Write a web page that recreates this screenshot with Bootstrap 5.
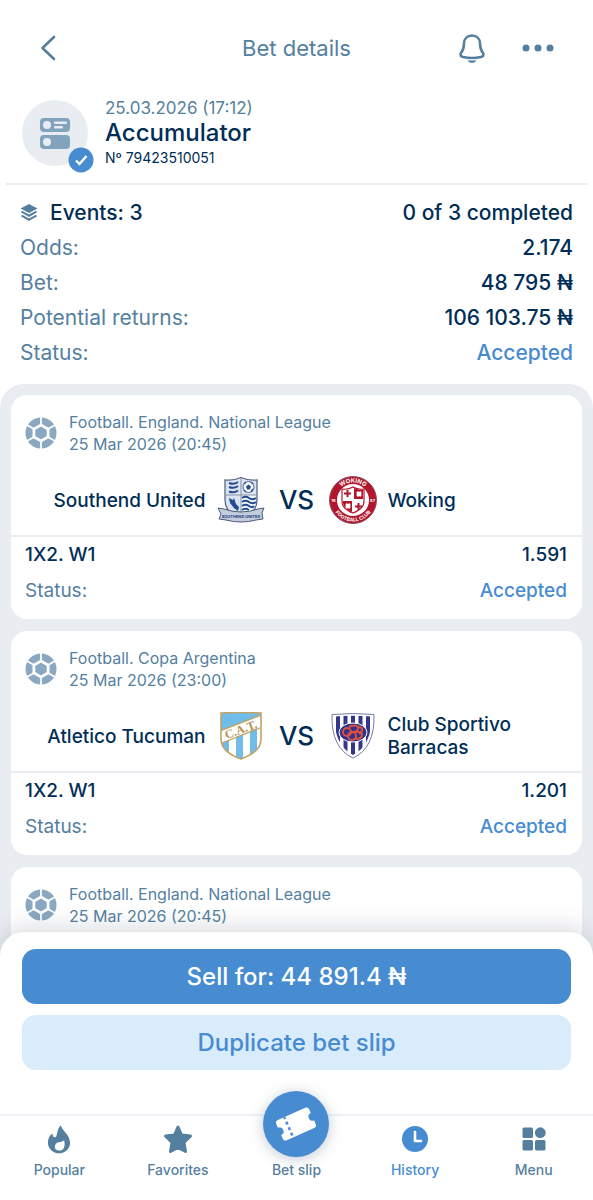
<!DOCTYPE html>
<html lang="en">
<head>
<meta charset="utf-8">
<meta name="viewport" content="width=device-width, initial-scale=1">
<title>Bet details</title>
<link href="https://cdn.jsdelivr.net/npm/bootstrap@5.3.0/dist/css/bootstrap.min.css" rel="stylesheet">
<style>
:root { --ink: #002e57; --slate: #557f9f; --brand: #478bd1; --panel: #e9edf2; }
body { font-family: Inter, "Liberation Sans", sans-serif; color: var(--ink); background: #fff; }
.slate { color: var(--slate); }
.brand { color: var(--brand); }
.top-bar { height: 96px; display: grid; grid-template-columns: 1fr auto 1fr; padding: 0 38px; }
.top-bar h1 { font-size: 22px; }
.icon-btn { border: 0; background: none; padding: 0; color: var(--slate); line-height: 0; }
.slip-head { padding: 1px 22px 14px; gap: 17px; }
.slip-icon { width: 66px; height: 66px; background: var(--panel); }
.slip-check { right: -6px; bottom: -7px; }
.slip-date { font-size: 17px; line-height: 22px; }
.slip-type { font-size: 24px; line-height: 28px; }
.slip-no { font-size: 14px; line-height: 22px; }
.rule { height: 2px; background: var(--panel); margin: 0 6px; }
.totals { font-size: 21px; line-height: 35px; padding: 10px 20px 14px; }
.events { background: var(--panel); border-radius: 24px 24px 0 0; padding: 11px 11px 0; gap: 12px; min-height: 0; }
.event { background: #fff; border-radius: 16px; flex: none; }
.event-head { padding: 16px 14px 0; gap: 12px; font-size: 16px; line-height: 22px; }
.teams { display: grid; grid-template-columns: 1fr auto 1fr; padding: 21px 14px 11px; font-size: 19px; line-height: 23px; border-bottom: 2px solid var(--panel); }
.teams .team { gap: 11px; }
.versus { font-size: 26px; line-height: 32px; width: 64px; }
.pick { font-size: 19px; line-height: 36px; padding: 0 15px 10px 14px; }
.dock { background: #fff; border-radius: 24px 24px 0 0; margin-top: -24px; box-shadow: 0 -4px 24px rgba(60, 70, 90, .2); z-index: 2; padding-top: 17px; }
.actions { padding: 0 22px 44px; gap: 11px; }
.actions .btn { height: 55px; border: 0; border-radius: 14px; font-size: 24px; line-height: 30px; }
.btn-sell { background: var(--brand); color: #fff; }
.btn-copy { background: #d9ecfb; color: var(--brand); }
.tabs { border-top: 2px solid #edf1f5; height: 86px; }
.tabs a { flex: 1 1 0; font-size: 14px; line-height: 18px; color: var(--slate); padding-top: 7px; }
.tabs a.brand { color: var(--brand); }
.tab-icon { height: 32px; margin-bottom: 6px; }
.slip-fab { width: 66px; height: 66px; background: var(--brand); box-shadow: 0 2px 14px rgba(60, 80, 110, .3); bottom: -2px; left: 50%; transform: translateX(-50%); }
</style>
</head>
<body>
<svg width="0" height="0" class="position-absolute" aria-hidden="true">
  <symbol id="ball" viewBox="0 0 32 32">
    <circle cx="16" cy="16" r="15.500" fill="#8aa8c1"/>
    <path d="M16 0v32M2 8l28 16M30 8 2 24" stroke="#fff" stroke-width="1.800"/>
    <path d="M16 7 24 11.500v9L16 25l-8-4.500v-9Z" fill="#fff" stroke="#fff" stroke-linejoin="round"/>
    <path d="m16 10.500 5 2.800v5.400l-5 2.800-5-2.800v-5.400Z" fill="#8aa8c1" stroke="#8aa8c1" stroke-width="1.500" stroke-linejoin="round"/>
  </symbol>
</svg>
<div class="d-flex flex-column vh-100 overflow-hidden">
  <header class="top-bar align-items-center flex-shrink-0">
    <button class="icon-btn text-start" aria-label="Back">
      <svg width="32" height="32" viewBox="0 0 32 32" fill="none" stroke="currentColor" stroke-width="2.600" stroke-linecap="round" stroke-linejoin="round"><path d="M16 5 4.500 16 16 27"/></svg>
    </button>
    <h1 class="m-0 slate fw-normal">Bet details</h1>
    <div class="d-flex justify-content-end align-items-center gap-4">
      <button class="icon-btn me-2" aria-label="Notifications">
        <svg width="34" height="34" viewBox="0 0 34 34"><path d="M17 4.500c-5 0-8 3.500-8 8 0 5-1 7-3 9.500-1.500 2 0 3.500 2 4 5.500 1.200 12.500 1.200 18 0 2-.500 3.500-2 2-4-2-2.500-3-4.500-3-9.500 0-4.500-3-8-8-8Z" fill="none" stroke="currentColor" stroke-width="2.600"/><path d="M12.500 29c3 .7 6 .7 9 0-1 2-2.500 2.800-4.500 2.800S13.500 31 12.500 29Z" fill="currentColor"/></svg>
      </button>
      <button class="icon-btn" aria-label="More">
        <svg width="34" height="32" viewBox="0 0 34 32" fill="currentColor"><circle cx="5" cy="16" r="3.500"/><circle cx="17" cy="16" r="3.500"/><circle cx="29" cy="16" r="3.500"/></svg>
      </button>
    </div>
  </header>

  <section class="slip-head d-flex align-items-center flex-shrink-0">
    <div class="slip-icon rounded-circle position-relative d-flex align-items-center justify-content-center">
      <svg width="32" height="32" viewBox="0 0 32 32"><g fill="#81a3be"><rect x="1" y="1" width="30" height="14" rx="4"/><rect x="1" y="18" width="30" height="14" rx="4"/></g><g fill="#e9edf2"><circle cx="8" cy="8" r="4"/><circle cx="8" cy="25" r="4"/><rect x="15" y="4.500" width="13" height="2.600" rx="1"/><rect x="15" y="9" width="9" height="2.600" rx="1"/></g></svg>
      <svg class="slip-check position-absolute" width="26" height="26" viewBox="0 0 26 26"><circle cx="13" cy="13" r="12.500" fill="#478bd1"/><path d="m8 13.500 3.500 3.500 7-8" fill="none" stroke="#fff" stroke-width="2.400"/></svg>
    </div>
    <div>
      <div class="slip-date slate">25.03.2026 (17:12)</div>
      <div class="slip-type fw-medium">Accumulator</div>
      <div class="slip-no">Nº 79423510051</div>
    </div>
  </section>
  <div class="rule flex-shrink-0"></div>

  <dl class="totals m-0 flex-shrink-0">
    <div class="d-flex justify-content-between"><dt class="fw-medium d-flex align-items-center gap-2"><svg class="me-1" width="18" height="20" viewBox="0 0 18 20" fill="#557f9f"><path d="M9 1 17.500 5.500 9 10 .5 5.500Z"/><path d="m.5 9 2-1L9 11.500 15.500 8l2 1L9 14Z"/><path d="m.5 13 2-1L9 15.500l6.500-3.500 2 1L9 18Z"/></svg>Events: 3</dt><dd class="m-0 fw-medium">0 of 3 completed</dd></div>
    <div class="d-flex justify-content-between"><dt class="fw-normal slate">Odds:</dt><dd class="m-0 fw-medium">2.174</dd></div>
    <div class="d-flex justify-content-between"><dt class="fw-normal slate">Bet:</dt><dd class="m-0 fw-medium">48 795 ₦</dd></div>
    <div class="d-flex justify-content-between"><dt class="fw-normal slate">Potential returns:</dt><dd class="m-0 fw-medium">106 103.75 ₦</dd></div>
    <div class="d-flex justify-content-between"><dt class="fw-normal slate">Status:</dt><dd class="m-0 fw-medium brand">Accepted</dd></div>
  </dl>

  <main class="events d-flex flex-column flex-grow-1 overflow-hidden">
    <article class="event">
      <div class="event-head d-flex align-items-center slate"><svg width="32" height="32" class="flex-shrink-0"><use href="#ball"/></svg><div>Football. England. National League<br>25 Mar 2026 (20:45)</div></div>
      <div class="teams align-items-center fw-medium">
        <div class="team d-flex align-items-center justify-content-end text-end"><span>Southend United</span>
          <svg class="flex-shrink-0" width="48" height="48" viewBox="0 0 48 48">
            <path d="M8 4q8 1 16-2.500Q32 5 40 4v20q0 13-16 20Q8 37 8 24Z" fill="#dbe3f0" stroke="#596889" stroke-width="1.300"/>
            <path d="M24 19h15v7q-1 9-15 14Z" fill="#f5f8fc"/>
            <path d="M24 2v38M8 19h32" stroke="#8793aa"/>
            <g fill="none" stroke="#234c91" stroke-width="2"><path d="M12 7q5 2 9-1M12 11q5 2 9-1M12 15.500q5 2 9-1"/><path d="M25 22q3.500-2.500 7 0t7 0M25 26q3.500-2.500 7 0t7 0M25 30q3.500-2.500 7 0t5 0M25 34q3-2.500 7 0"/></g>
            <path d="m12 22 4 2 1-2 2 6 3 3-1 4-4-3-4-5Z" fill="#234c91"/>
            <circle cx="31.500" cy="11" r="5.500" fill="#fff" stroke="#516a98"/><path d="m31.500 8.500 2.500 2-1 3h-3l-1-3Z" fill="#234c91"/><path d="M27 8l2-2M34 6l2 2M27 14l2 2M36 13l-2 3" stroke="#234c91" stroke-width="1.500"/>
            <path d="M1 32l6 1q17 6 34 0l6-1-2 5 1 6-7 1q-15 4-30 0l-7-1 2-5Z" fill="#c4cddd" stroke="#4c5a77"/>
            <text x="24" y="42" text-anchor="middle" font-size="4" font-weight="700" fill="#1f417d">SOUTHEND UNITED</text>
          </svg></div>
        <div class="versus text-center">VS</div>
        <div class="team d-flex align-items-center">
          <svg class="flex-shrink-0" width="48" height="48" viewBox="0 0 48 48">
            <circle cx="24" cy="24" r="23.500" fill="#b3152d" stroke="#8e5059"/><circle cx="24" cy="24" r="16" fill="#fff"/>
            <path d="M13 13q6 1 11-2 5 3 11 2v12q0 8-11 12-11-4-11-12Z" fill="#fff" stroke="#b3152d" stroke-width="1.200"/>
            <path d="M25 12q5 2 9 2v9h-9ZM14 25h9v11q-8-3-9-9Z" fill="#b3152d"/>
            <path d="M18.500 14v7M15 17.500h7M29.500 27v7M26 30.500h7" stroke="#b3152d" stroke-width="2"/>
            <path d="m28 16 4 4m0-4-4 4M17 28l4 4m0-4-4 4" stroke="#fff" stroke-width="2.500"/>
            <path id="w-top" d="M6.500 24a17.500 17.500 0 0 1 35 0" fill="none"/><path id="w-low" d="M2.500 24a21.500 21.500 0 0 0 43 0" fill="none"/>
            <g font-size="5" font-weight="700" fill="#fff" text-anchor="middle"><text font-size="6"><textPath href="#w-top" startOffset="50%">WOKING</textPath></text><text><textPath href="#w-low" startOffset="50%">FOOTBALL CLUB</textPath></text><text x="4.500" y="26" font-size="4">18</text><text x="43.500" y="26" font-size="4">87</text></g>
          </svg><span>Woking</span></div>
      </div>
      <div class="pick">
        <div class="d-flex justify-content-between fw-medium"><span>1X2. W1</span><span>1.591</span></div>
        <div class="d-flex justify-content-between"><span class="slate">Status:</span><span class="brand fw-medium">Accepted</span></div>
      </div>
    </article>

    <article class="event">
      <div class="event-head d-flex align-items-center slate"><svg width="32" height="32" class="flex-shrink-0"><use href="#ball"/></svg><div>Football. Copa Argentina<br>25 Mar 2026 (23:00)</div></div>
      <div class="teams align-items-center fw-medium">
        <div class="team d-flex align-items-center justify-content-end text-end"><span>Atletico Tucuman</span>
          <svg class="flex-shrink-0" width="48" height="48" viewBox="0 0 48 48">
            <clipPath id="cat"><path d="M4 1q20-1 40 0v26q0 13-20 20Q4 40 4 27Z"/></clipPath>
            <g clip-path="url(#cat)"><path d="M0 0h48v48H0Z" fill="#fff"/><path d="M0 0h48v2L0 20ZM4 31l8-3v20H4ZM19 25l7-3v26h-7ZM33 19l7-3v32h-7Z" fill="#71bdea"/><path d="M0 20 48 1.500M0 33l48-19" stroke="#c2a366" stroke-width="1.300"/></g>
            <path d="M4 1q20-1 40 0v26q0 13-20 20Q4 40 4 27Z" fill="none" stroke="#c2a366" stroke-width="1.600"/>
            <text x="24" y="21.500" transform="rotate(-20 24 18)" text-anchor="middle" font-family="Liberation Serif, serif" font-size="12" font-weight="700" fill="#b6924e">C.A.T.</text>
          </svg></div>
        <div class="versus text-center">VS</div>
        <div class="team d-flex align-items-center">
          <svg class="flex-shrink-0" width="48" height="48" viewBox="0 0 48 48">
            <clipPath id="csb"><path d="M5.500 4.500Q24 3 42.500 4.500 43 33 24 43 5 33 5.500 4.500Z"/></clipPath>
            <path d="M3 2.500q21-2 42 0Q46 36 24 46 2 36 3 2.500Z" fill="#fff" stroke="#7779a9"/>
            <g clip-path="url(#csb)"><path d="M9 0v48M16.500 0v48M24 0v48M31.500 0v48M39 0v48" stroke="#34368d" stroke-width="4"/></g>
            <ellipse cx="24" cy="20.500" rx="14" ry="9.500" fill="#30338c" stroke="#fff"/>
            <g fill="none" stroke="#dd5040" stroke-width="2"><circle cx="18" cy="20" r="4"/><circle cx="23" cy="24" r="4"/><path d="M20 15q6-3 9 0 1 4-5 5 8-1 9 2 0 5-6 5M29 15q5 0 4 4l-3 3"/></g>
          </svg><span>Club Sportivo Barracas</span></div>
      </div>
      <div class="pick">
        <div class="d-flex justify-content-between fw-medium"><span>1X2. W1</span><span>1.201</span></div>
        <div class="d-flex justify-content-between"><span class="slate">Status:</span><span class="brand fw-medium">Accepted</span></div>
      </div>
    </article>

    <article class="event flex-grow-1 rounded-bottom-0">
      <div class="event-head d-flex align-items-center slate"><svg width="32" height="32" class="flex-shrink-0"><use href="#ball"/></svg><div>Football. England. National League<br>25 Mar 2026 (20:45)</div></div>
    </article>
  </main>

  <footer class="dock position-relative flex-shrink-0">
    <div class="actions d-flex flex-column">
      <button class="btn btn-sell w-100 fw-medium">Sell for: 44 891.4 ₦</button>
      <button class="btn btn-copy w-100 fw-medium">Duplicate bet slip</button>
    </div>
    <nav class="tabs d-flex text-center fw-medium" aria-label="Main">
      <a href="#" class="text-decoration-none"><div class="tab-icon d-flex align-items-center justify-content-center"><svg width="24" height="30" viewBox="0 0 26 32"><path d="M15 1c1 6 10 10 10 19a12 11.500 0 0 1-24 0c0-5 2-8 5-10 0 3 1 4.500 3 4 3-2 1-8 6-13Z" fill="currentColor"/><path d="M18.500 17c2 8-1 11.500-5 11.500-7 0-6-8-1-9 3-.5 5-1 6-2.500Z" fill="#fff"/></svg></div>Popular</a>
      <a href="#" class="text-decoration-none"><div class="tab-icon d-flex align-items-center justify-content-center"><svg width="32" height="32" viewBox="0 0 32 32"><path d="m16 4 3.500 8 9 1-6.500 6.500L23.500 28.500 16 24.500 8.500 28.500 10 19.500 3.500 13l9-1Z" fill="currentColor" stroke="currentColor" stroke-width="3" stroke-linejoin="round"/></svg></div>Favorites</a>
      <a href="#" class="text-decoration-none"><div class="tab-icon position-relative"><span class="slip-fab position-absolute rounded-circle d-flex align-items-center justify-content-center"><svg width="44" height="44" viewBox="0 0 44 44"><g transform="rotate(-24 22 22)"><path d="M7 11h30q3 0 3 3v4a4 4 0 0 0 0 8v4q0 3-3 3H7q-3 0-3-3v-4a4 4 0 0 0 0-8v-4q0-3 3-3Z" fill="#fff"/><path d="M14 11v22" stroke="#478bd1" stroke-width="2.500" stroke-dasharray="3 3" stroke-dashoffset="1"/></g></svg></span></div>Bet slip</a>
      <a href="#" class="text-decoration-none brand" aria-current="page"><div class="tab-icon d-flex align-items-center justify-content-center"><svg width="26" height="26" viewBox="0 0 26 26"><circle cx="13" cy="13" r="13" fill="currentColor"/><path d="M13 6v9h6" fill="none" stroke="#fff" stroke-width="2.600" stroke-linecap="round" stroke-linejoin="round"/></svg></div>History</a>
      <a href="#" class="text-decoration-none"><div class="tab-icon d-flex align-items-center justify-content-center"><svg width="24" height="24" viewBox="0 0 24 24" fill="currentColor"><rect x=".5" y=".5" width="10.500" height="10.500" rx="1.500"/><circle cx="18.300" cy="5.700" r="5.400"/><rect x=".5" y="13" width="10.500" height="10.500" rx="1.500"/><rect x="13" y="13" width="10.500" height="10.500" rx="1.500"/></svg></div>Menu</a>
    </nav>
  </footer>
</div>
<script src="https://cdn.jsdelivr.net/npm/bootstrap@5.3.0/dist/js/bootstrap.bundle.min.js"></script>
</body>
</html>
